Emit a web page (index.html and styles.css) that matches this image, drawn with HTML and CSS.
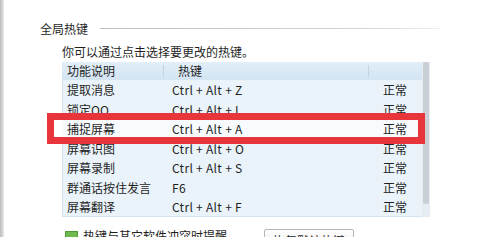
FILE: index.html
```html
<!DOCTYPE html>
<html lang="zh-CN">
<head>
<meta charset="utf-8">
<title>全局热键</title>
<link rel="stylesheet" href="styles.css">
</head>
<body>
<div class="page">
  <div class="edge"></div>
  <div class="content">
    <div class="group-title">
      <span class="title-text">全局热键</span>
      <span class="title-line"></span>
    </div>
    <div class="hint">你可以通过点击选择要更改的热键。</div>
    <div class="table-wrap">
      <div class="table">
        <div class="row head">
          <div class="c1">功能说明</div>
          <div class="c2">热键</div>
          <div class="c3"></div>
        </div>
        <div class="row"><div class="c1">提取消息</div><div class="c2 keys">Ctrl + Alt + Z</div><div class="c3">正常</div></div>
        <div class="row"><div class="c1">锁定QQ</div><div class="c2 keys">Ctrl + Alt + L</div><div class="c3">正常</div></div>
        <div class="row sel"><div class="c1">捕捉屏幕</div><div class="c2 keys">Ctrl + Alt + A</div><div class="c3">正常</div></div>
        <div class="row"><div class="c1">屏幕识图</div><div class="c2 keys">Ctrl + Alt + O</div><div class="c3">正常</div></div>
        <div class="row"><div class="c1">屏幕录制</div><div class="c2 keys">Ctrl + Alt + S</div><div class="c3">正常</div></div>
        <div class="row"><div class="c1">群通话按住发言</div><div class="c2 keys">F6</div><div class="c3">正常</div></div>
        <div class="row"><div class="c1">屏幕翻译</div><div class="c2 keys">Ctrl + Alt + F</div><div class="c3">正常</div></div>
      </div>
      <div class="scrollbar"><div class="thumb"></div></div>
      <div class="highlight"></div>
    </div>
    <div class="bottom">
      <span class="check"></span>
      <span class="check-label">热键与其它软件冲突时提醒</span>
      <span class="btn">恢复默认热键</span>
    </div>
  </div>
</div>
</body>
</html>
```
FILE: styles.css
```css
html, body {
  margin: 0;
  padding: 0;
  background: #ffffff;
  width: 500px;
  height: 237px;
  overflow: hidden;
}
body {
  font-family: "Noto Sans CJK SC", "Noto Sans", sans-serif;
  font-size: 12px;
  color: #1f1f1f;
}
.page {
  display: flex;
  height: 237px;
}
.edge {
  width: 4px;
  flex: none;
  background: linear-gradient(to right, #bdbdbd, #d8d8d8 70%, #efefef);
}
.content {
  flex: 1;
  padding-left: 36px;
  padding-top: 21px;
}
.group-title {
  display: flex;
  align-items: center;
  width: 400px;
  height: 16px;
}
.title-text {
  line-height: 16px;
}
.title-line {
  margin-left: 12px;
  flex: 1;
  height: 1px;
  background: linear-gradient(to right, #b8c0c8, #d0d6dc 80%, #eef0f2);
  margin-top: -2px;
}
.hint {
  margin-left: 22px;
  margin-top: 7px;
  line-height: 16px;
  height: 16px;
}
.table-wrap {
  position: relative;
  margin-left: 22px;
  margin-top: 2px;
  width: 368px;
  height: 155px;
  display: flex;
  background: #eaf3fa;
  box-shadow: inset 0 0 0 1px #d7e4ef;
}
.table {
  width: 360px;
  display: flex;
  flex-direction: column;
}
.row {
  display: grid;
  grid-template-columns: 101px 205px 54px;
  height: 19.5px;
  line-height: 19.5px;
  white-space: nowrap;
}
.row.head {
  height: 18px;
  line-height: 18px;
  background: linear-gradient(to bottom, #e2eef8, #d3e4f2);
}
.row.sel {
  background: #f7fbfe;
}
.c1 {
  padding-left: 5px;
}
.c2 {
  padding-left: 8px;
}
.keys {
  letter-spacing: 0.3px;
}
.c3 {
  padding-left: 15px;
}
.head .c2 {
  padding-left: 14px;
  border-left: 1px solid #c2d4e4;
  margin: 3px 0;
  line-height: 12px;
}
.head .c1 {
  line-height: 18px;
}
.head .c3 {
  border-left: 1px solid #c2d4e4;
  margin: 3px 0;
}
.row:not(.head) .c2 {
  margin-left: 1px;
}
.scrollbar {
  width: 8px;
  background: #e6ecf1;
  display: flex;
  flex-direction: column;
}
.thumb {
  height: 142px;
  margin: 0 1px;
  border-radius: 2px;
  background: #c9cfd5;
}
.highlight {
  position: absolute;
  left: -15px;
  top: 51px;
  width: 364px;
  height: 17px;
  border: 7px solid #e8343b;
}
.bottom {
  display: flex;
  align-items: flex-start;
  margin-top: 10px;
  margin-left: 3px;
}
.check {
  width: 11px;
  height: 11px;
  margin-top: 4px;
  margin-left: 22px;
  background: #6dbb4f;
  border: 1px solid #4e9a36;
  flex: none;
}
.check-label {
  margin-left: 5px;
  line-height: 18px;
}
.btn {
  margin-left: 37px;
  margin-top: 2px;
  padding: 0 8px;
  height: 22px;
  line-height: 22px;
  border: 1px solid #b5b5b5;
  border-radius: 2px;
  background: linear-gradient(to bottom, #fdfdfd, #ececec);
}
```
